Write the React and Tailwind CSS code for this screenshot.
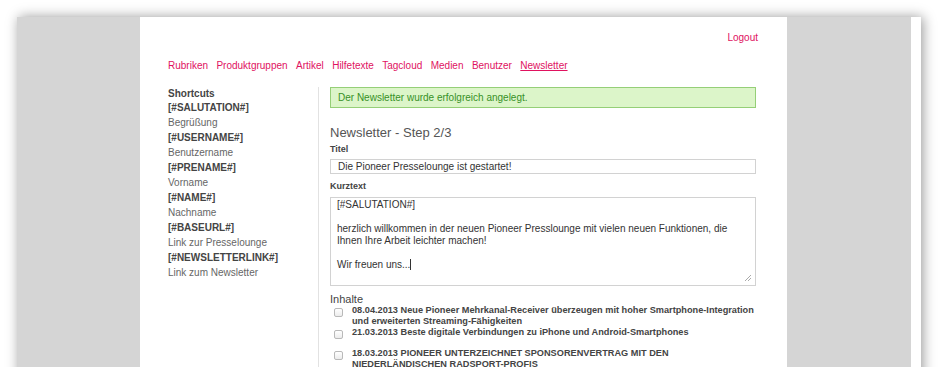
import React from 'react';

const NAV_ITEMS = ['Rubriken', 'Produktgruppen', 'Artikel', 'Hilfetexte', 'Tagcloud', 'Medien', 'Benutzer', 'Newsletter'];

const SHORTCUTS = [
  { token: '[#SALUTATION#]', label: 'Begrüßung' },
  { token: '[#USERNAME#]', label: 'Benutzername' },
  { token: '[#PRENAME#]', label: 'Vorname' },
  { token: '[#NAME#]', label: 'Nachname' },
  { token: '[#BASEURL#]', label: 'Link zur Presselounge' },
  { token: '[#NEWSLETTERLINK#]', label: 'Link zum Newsletter' }
];

const CONTENTS = [
  ['08.04.2013 Neue Pioneer Mehrkanal-Receiver überzeugen mit hoher Smartphone-Integration', 'und erweiterten Streaming-Fähigkeiten'],
  ['21.03.2013 Beste digitale Verbindungen zu iPhone und Android-Smartphones'],
  ['18.03.2013 PIONEER UNTERZEICHNET SPONSORENVERTRAG MIT DEN', 'NIEDERLÄNDISCHEN RADSPORT-PROFIS']
];

const Checkbox = () => (
  <span className="mt-[3px] ml-[4px] mr-[9px] w-[9px] h-[9px] shrink-0 rounded-[2px] border border-[#b9b9b9] bg-gradient-to-b from-white to-[#ececec]" />
);

const App = () => {
  return (
    <div
      className="w-[940px] h-[367px] overflow-hidden bg-white pt-[17px] pl-[17px]"
      style={{ fontFamily: '"Liberation Sans", Arial, sans-serif' }}
    >
      {/* Browser frame */}
      <div className="flex w-[904px] h-[420px] bg-white shadow-[2px_0_12px_rgba(0,0,0,0.4)]">
        <div className="w-[123px] bg-[#d5d5d5]" />

        {/* Page */}
        <div className="w-[647px] bg-white pl-[28px] pr-[29px]">
          <div className="pt-[15px] text-right text-[10px] leading-[12px] text-[#e0125f]">Logout</div>

          <nav className="mt-[16px] flex gap-[8.4px] text-[10px] leading-[12px] text-[#e0125f]">
            {NAV_ITEMS.map((item) => (
              <span key={item} className={item === 'Newsletter' ? 'underline' : ''}>
                {item}
              </span>
            ))}
          </nav>

          <div className="mt-[15px] flex">
            {/* Shortcuts */}
            <div className="w-[150px] text-[10px]">
              <div className="font-bold leading-[13px] text-[#444]">Shortcuts</div>
              {SHORTCUTS.map((s) => (
                <div key={s.token} className="leading-[15px]">
                  <div className="font-bold text-[#444]">{s.token}</div>
                  <div className="text-[#666]">{s.label}</div>
                </div>
              ))}
            </div>

            <div className="w-px h-[300px] bg-[#e2e2e2]" />

            {/* Form */}
            <div className="w-[437px] pl-[11px]">
              <div className="h-[21px] border border-[#95cf77] bg-[#dcf5c9] pl-[7px] text-[10px] leading-[19px] text-[#379127]">
                Der Newsletter wurde erfolgreich angelegt.
              </div>

              <h1 className="mt-[17px] text-[13px] leading-[15px] text-[#555]">Newsletter - Step 2/3</h1>

              <div className="mt-[4px] text-[9px] font-bold leading-[11px] text-[#444]">Titel</div>
              <div className="mt-[3.5px] h-[15px] border border-[#d2d2d2] pl-[7px] text-[10px] leading-[13px] text-[#333]">
                Die Pioneer Presselounge ist gestartet!
              </div>

              <div className="mt-[7.5px] text-[9px] font-bold leading-[11px] text-[#444]">Kurztext</div>
              <div className="relative mt-[4.5px] h-[89px] border border-[#d2d2d2] pl-[6px] pt-[1px] text-[10px] leading-[12px] text-[#333]">
                <div>[#SALUTATION#]</div>
                <div>&nbsp;</div>
                <div className="whitespace-nowrap">herzlich willkommen in der neuen Pioneer Presslounge mit vielen neuen Funktionen, die</div>
                <div>Ihnen Ihre Arbeit leichter machen!</div>
                <div>&nbsp;</div>
                <div>
                  Wir freuen uns...<span className="inline-block w-px h-[11px] bg-[#333] align-[-2px]" />
                </div>
                <svg className="absolute right-[3px] bottom-[3px]" width="8" height="8" viewBox="0 0 8 8">
                  <path d="M7 1L1 7M7 4L4 7" stroke="#aaa" strokeWidth="1" />
                </svg>
              </div>

              <div className="mt-[7px] text-[11px] leading-[12px] text-[#444]">Inhalte</div>
              <div className="text-[9.2px] font-bold leading-[11px] text-[#444]">
                {CONTENTS.map((lines, i) => (
                  <div key={i} className="flex min-h-[21px]">
                    <Checkbox />
                    <div className="whitespace-nowrap">
                      {lines.map((l) => (
                        <div key={l}>{l}</div>
                      ))}
                    </div>
                  </div>
                ))}
              </div>
            </div>
          </div>
        </div>

        <div className="w-[124px] bg-[#d5d5d5]" />
        <div className="w-[10px] bg-white" />
      </div>
    </div>
  );
};

export default App;
